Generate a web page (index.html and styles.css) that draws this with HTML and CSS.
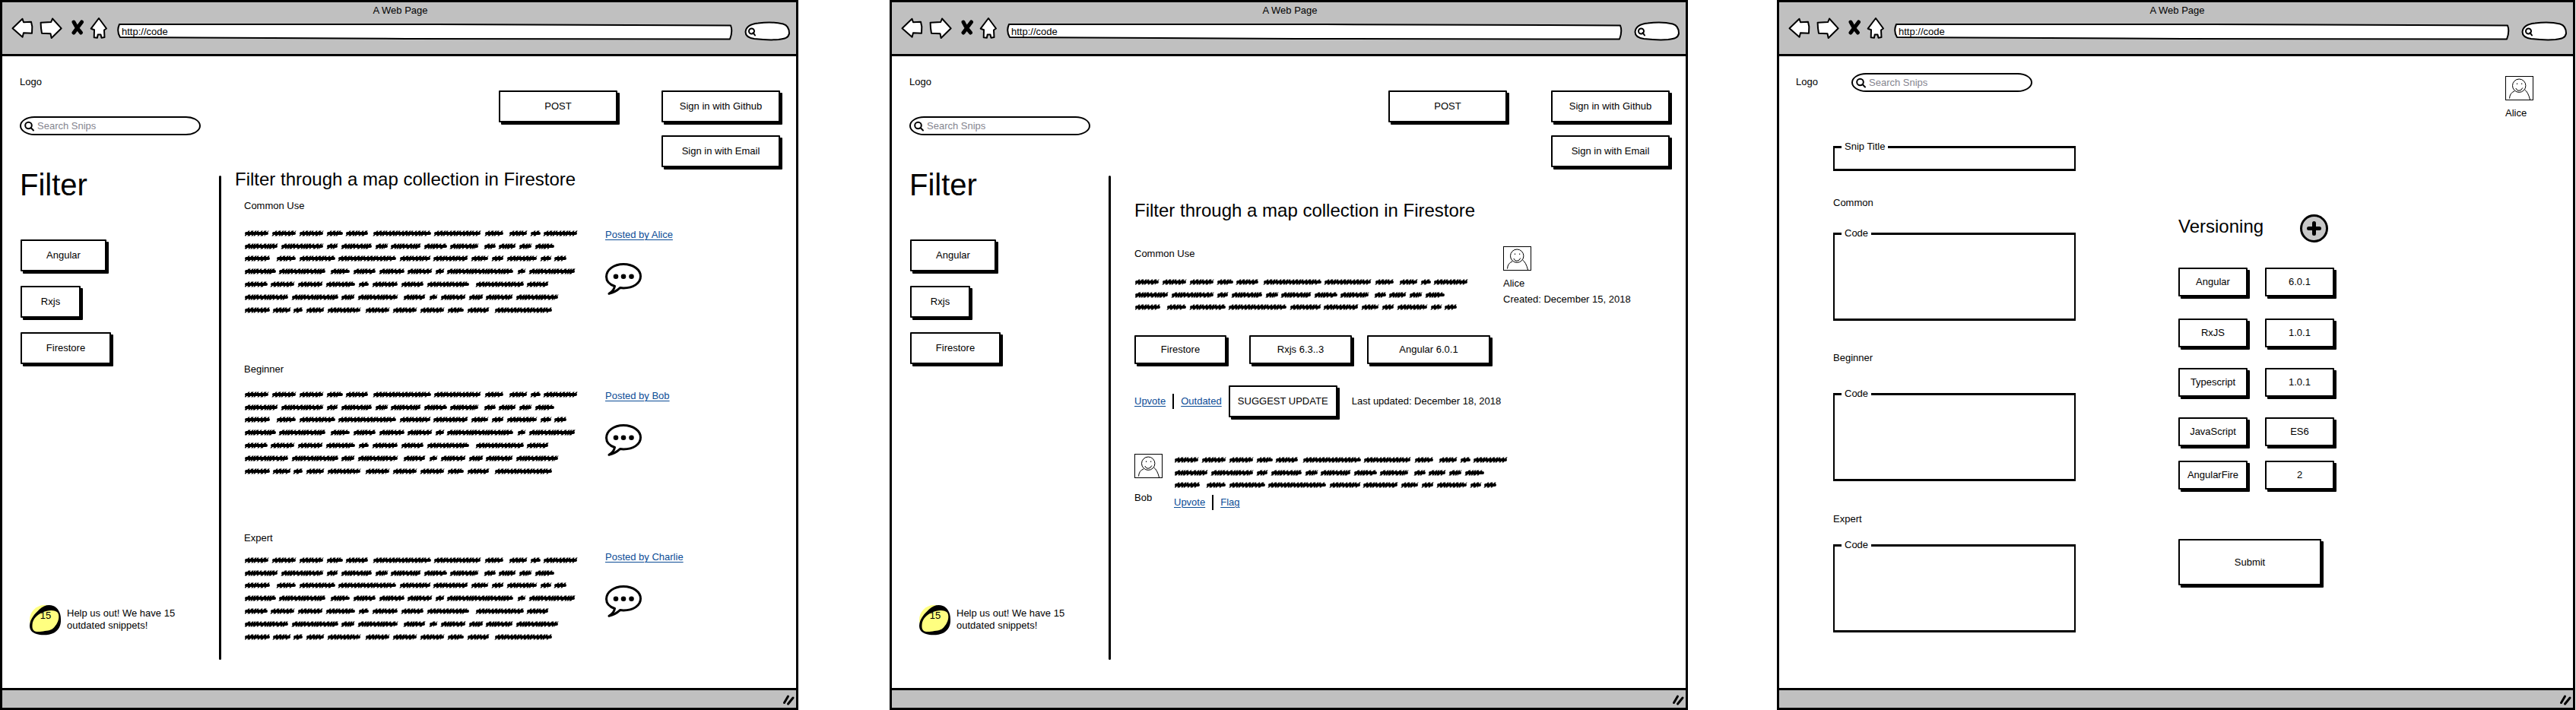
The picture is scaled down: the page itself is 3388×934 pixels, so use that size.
FILE: index.html
```html
<!DOCTYPE html>
<html lang="en">
<head>
<meta charset="utf-8">
<title>A Web Page</title>
<link rel="stylesheet" href="styles.css">
</head>
<body>

<svg class="sprite" aria-hidden="true">
  <defs>
    <symbol id="i-back" viewBox="14 22 34 32"><path class="ink fill-white" d="M16.500 37.300L29.500 24.700L31 29.300L41 28.700L42.300 35L42 43.700L31 43.300L29.600 48.700Z"/></symbol>
    <symbol id="i-forward" viewBox="48 22 40 32"><path class="ink fill-white" d="M53.600 29.700L67.200 29L69 24.500L80.700 37.300L67.700 50L66.500 44.300L55 43.800L54 37Z"/></symbol>
    <symbol id="i-stop" viewBox="88 22 26 32"><path class="ink-thick" d="M97 29Q100 36 106.500 43M107.500 29Q103 35 97 43"/></symbol>
    <symbol id="i-home" viewBox="114 22 32 32"><path class="ink fill-white" d="M130 24L140 37.500L137 39.500L137.500 49L133.500 49.700L132.500 45.500H128.700L128 49.700L123.700 49.300L124 39.300L119.700 37.700Z"/></symbol>
    <symbol id="i-pill" viewBox="979 22 60 32"><path class="ink fill-white" d="M980.500 42C981 35 988 31.500 997 30.500C1008 29 1022 29.500 1030 31.500C1037 33.500 1038 39 1038 44C1037 50 1032 51 1024 52C1012 53 1001 52 992 51C985 50 980.500 48 980.500 42Z"/><circle class="ink" cx="988.500" cy="41" r="3.500"/><path class="ink" d="M990.500 43L993 46.500"/></symbol>
    <symbol id="i-glass" viewBox="0 0 14 14"><circle class="ink" cx="5.500" cy="6" r="4.300"/><path class="ink" d="M8.500 9L12 12.500"/></symbol>
    <symbol id="i-grip" viewBox="0 0 18 16"><path class="ink-grip" d="M7.500 3L2.500 11.500M14 5L7.500 13"/></symbol>
    <symbol id="i-bubble" viewBox="0 0 48 42"><path class="ink-bold fill-white" d="M12.500 30.500C5 28 1.500 23.500 1.500 18C1.500 9 11 1.500 24 1.500S46.500 9 46.500 17.500C46.500 26.500 37 33 24 33Q22 33 19.500 32.600Q13 38.500 5 40.300Q11.500 36.500 12.500 30.500Z"/><circle cx="14" cy="17.700" r="3.300"/><circle cx="24" cy="17.700" r="3.300"/><circle cx="34.500" cy="17.700" r="3.300"/></symbol>
    <symbol id="i-avatar" viewBox="0 0 38 32"><rect x=".5" y=".5" width="36" height="31" class="hair fill-white"/><ellipse class="hair" cx="18.200" cy="12.700" rx="8.700" ry="8.700"/><path class="hair" d="M15.500 9.500V11M21.700 9.500V11M13.800 16Q15 19.300 18 19.300Q21.500 19 22.800 15.500M5.500 29.500Q6 22 12 20M25.500 18Q30 21 32.500 31"/></symbol>
    <symbol id="i-badge" viewBox="39 795 42 41"><circle cx="58.500" cy="815.500" r="19.500" class="yellow"/><path d="M39 823C39.500 814 46 807 52 801.500C57 796.500 64 794.500 70 797C76 799.500 80 806 80 814C80.500 822 78 828 71 832.500C64 836 54 836 48 834C42 832 39 829 39 823Z"/><path class="yellow" d="M42.500 822C43 814 49 808.500 56 805.500C63 802 73 802 76 806C79 811 76.500 819 72.500 823.500C70 828 65 829.500 59 830C54 831 47 832 44.500 829.500C42.500 827.500 42.300 825 42.500 822Z"/></symbol>

    <path id="w1" d="M2 0H29M38 0H65M74 0H101M110 0H127M135 0H160M171 0H243M251 0H308M318 0H338M350 0H369M378 0H387M395 0H435"/>
    <path id="w2" d="M2 0H41M50 0H101M110 0H120M129 0H165M174 0H186M194 0H229M238 0H264M272 0H305M317 0H328M336 0H354M363 0H375M384 0H405"/>
    <path id="w3" d="M2 0H31M44 0H65M74 0H117M125 0H197M206 0H242M250 0H291M300 0H318M327 0H338M347 0H382M391 0H401M409 0H421"/>
    <path id="w4" d="M2 0H39M47 0H104M115 0H136M145 0H170M179 0H208M216 0H244M253 0H260M268 0H351M361 0H367M376 0H432"/>
    <path id="w5" d="M2 0H28M36 0H63M72 0H100M109 0H143M152 0H161M170 0H199M208 0H233M242 0H293M306 0H365M373 0H397"/>
    <path id="w6" d="M2 0H55M64 0H121M129 0H142M151 0H199M211 0H235M245 0H251M260 0H288M297 0H311M319 0H350M359 0H410"/>
    <path id="w7" d="M2 0H31M39 0H58M66 0H74M83 0H102M111 0H150M161 0H188M197 0H224M233 0H260M269 0H286M295 0H319M331 0H402"/>
    <g id="text-3">
      <g transform="translate(0 7)"><use href="#w1" class="core"/><use href="#w1" class="ticks" transform="skewX(-38)"/></g>
      <g transform="translate(0 24)"><use href="#w2" class="core"/><use href="#w2" class="ticks ticks-b" transform="skewX(-38)"/></g>
      <g transform="translate(0 40)"><use href="#w3" class="core"/><use href="#w3" class="ticks" transform="skewX(-38)"/></g>
    </g>
    <g id="text-7">
      <use href="#text-3"/>
      <g transform="translate(0 57)"><use href="#w4" class="core"/><use href="#w4" class="ticks ticks-b" transform="skewX(-38)"/></g>
      <g transform="translate(0 74)"><use href="#w5" class="core"/><use href="#w5" class="ticks" transform="skewX(-38)"/></g>
      <g transform="translate(0 91)"><use href="#w6" class="core"/><use href="#w6" class="ticks ticks-b" transform="skewX(-38)"/></g>
      <g transform="translate(0 108)"><use href="#w7" class="core"/><use href="#w7" class="ticks" transform="skewX(-38)"/></g>
    </g>
  </defs>
</svg>

<div class="boards">

<!-- Snippet list -->
<section class="window">
  <header class="chrome">
    <div class="chrome-title">A Web Page</div>
    <div class="toolbar">
      <button class="tool" aria-label="Back"><svg width="34" height="32"><use href="#i-back"/></svg></button>
      <button class="tool" aria-label="Forward"><svg width="40" height="32"><use href="#i-forward"/></svg></button>
      <button class="tool" aria-label="Stop"><svg width="26" height="32"><use href="#i-stop"/></svg></button>
      <button class="tool" aria-label="Home"><svg width="32" height="32"><use href="#i-home"/></svg></button>
      <div class="address">
        <svg class="address-frame" viewBox="0 0 811 22" preserveAspectRatio="none"><path class="ink fill-white" d="M3 1H420L808 2.500Q811 10 807 20.500L380 20L4 18Q-1 10 3 1Z"/></svg>
        <input class="address-input" type="text" value="http://code" aria-label="Address">
      </div>
      <div class="quick"><svg width="60" height="32"><use href="#i-pill"/></svg><input class="quick-input" type="text" aria-label="Web search"></div>
    </div>
  </header>
  <div class="page">
    <div class="topbar">
      <div class="brand">
        <div class="logo">Logo</div>
        <label class="search"><svg width="14" height="14"><use href="#i-glass"/></svg><input type="search" placeholder="Search Snips" aria-label="Search Snips"></label>
      </div>
      <div class="actions">
        <button class="btn btn-wide">POST</button>
        <div class="signin">
          <button class="btn btn-wide">Sign in with Github</button>
          <button class="btn btn-wide">Sign in with Email</button>
        </div>
      </div>
    </div>
    <div class="columns">
      <aside class="sidebar">
        <h1 class="filter-title">Filter</h1>
        <div class="filters">
          <button class="btn w-angular">Angular</button>
          <button class="btn w-rxjs">Rxjs</button>
          <button class="btn w-firestore">Firestore</button>
        </div>
        <div class="help">
          <div class="badge"><svg width="42" height="41"><use href="#i-badge"/></svg><span class="badge-count">15</span></div>
          <p class="help-text">Help us out! We have 15<br>outdated snippets!</p>
        </div>
      </aside>
      <div class="divider"></div>
      <main class="feed">
        <h2 class="title">Filter through a map collection in Firestore</h2>
        <section class="snippet snippet-common">
          <h3 class="label">Common Use</h3>
          <div class="snippet-row">
            <svg class="scribble" width="440" height="114" role="img" aria-label="Snippet text"><use href="#text-7"/></svg>
            <div class="meta"><a class="link" href="#alice">Posted by Alice</a><svg class="bubble" width="48" height="42"><use href="#i-bubble"/></svg></div>
          </div>
        </section>
        <section class="snippet snippet-beginner">
          <h3 class="label">Beginner</h3>
          <div class="snippet-row">
            <svg class="scribble" width="440" height="114" role="img" aria-label="Snippet text"><use href="#text-7"/></svg>
            <div class="meta"><a class="link" href="#bob">Posted by Bob</a><svg class="bubble" width="48" height="42"><use href="#i-bubble"/></svg></div>
          </div>
        </section>
        <section class="snippet snippet-expert">
          <h3 class="label">Expert</h3>
          <div class="snippet-row">
            <svg class="scribble" width="440" height="114" role="img" aria-label="Snippet text"><use href="#text-7"/></svg>
            <div class="meta"><a class="link" href="#charlie">Posted by Charlie</a><svg class="bubble" width="48" height="42"><use href="#i-bubble"/></svg></div>
          </div>
        </section>
      </main>
    </div>
  </div>
  <footer class="status"><svg width="18" height="16"><use href="#i-grip"/></svg></footer>
</section>

<!-- Snippet detail -->
<section class="window window-detail">
  <header class="chrome">
    <div class="chrome-title">A Web Page</div>
    <div class="toolbar">
      <button class="tool" aria-label="Back"><svg width="34" height="32"><use href="#i-back"/></svg></button>
      <button class="tool" aria-label="Forward"><svg width="40" height="32"><use href="#i-forward"/></svg></button>
      <button class="tool" aria-label="Stop"><svg width="26" height="32"><use href="#i-stop"/></svg></button>
      <button class="tool" aria-label="Home"><svg width="32" height="32"><use href="#i-home"/></svg></button>
      <div class="address">
        <svg class="address-frame" viewBox="0 0 811 22" preserveAspectRatio="none"><path class="ink fill-white" d="M3 1H420L808 2.500Q811 10 807 20.500L380 20L4 18Q-1 10 3 1Z"/></svg>
        <input class="address-input" type="text" value="http://code" aria-label="Address">
      </div>
      <div class="quick"><svg width="60" height="32"><use href="#i-pill"/></svg><input class="quick-input" type="text" aria-label="Web search"></div>
    </div>
  </header>
  <div class="page">
    <div class="topbar">
      <div class="brand">
        <div class="logo">Logo</div>
        <label class="search"><svg width="14" height="14"><use href="#i-glass"/></svg><input type="search" placeholder="Search Snips" aria-label="Search Snips"></label>
      </div>
      <div class="actions">
        <button class="btn btn-wide">POST</button>
        <div class="signin">
          <button class="btn btn-wide">Sign in with Github</button>
          <button class="btn btn-wide">Sign in with Email</button>
        </div>
      </div>
    </div>
    <div class="columns">
      <aside class="sidebar">
        <h1 class="filter-title">Filter</h1>
        <div class="filters">
          <button class="btn w-angular">Angular</button>
          <button class="btn w-rxjs">Rxjs</button>
          <button class="btn w-firestore">Firestore</button>
        </div>
        <div class="help">
          <div class="badge"><svg width="42" height="41"><use href="#i-badge"/></svg><span class="badge-count">15</span></div>
          <p class="help-text">Help us out! We have 15<br>outdated snippets!</p>
        </div>
      </aside>
      <div class="divider"></div>
      <main class="detail">
        <h2 class="title">Filter through a map collection in Firestore</h2>
        <div class="detail-grid">
          <div class="detail-text">
            <h3 class="label">Common Use</h3>
            <svg class="scribble" width="440" height="47" role="img" aria-label="Snippet text"><use href="#text-3"/></svg>
          </div>
          <div class="author">
            <svg width="38" height="32"><use href="#i-avatar"/></svg>
            <div class="author-name">Alice</div>
            <div class="author-date">Created: December 15, 2018</div>
          </div>
        </div>
        <div class="tags">
          <button class="btn btn-short w-tag-firestore">Firestore</button>
          <button class="btn btn-short w-tag-rxjs">Rxjs 6.3..3</button>
          <button class="btn btn-short w-tag-angular">Angular 6.0.1</button>
        </div>
        <div class="votes">
          <a class="link" href="#upvote">Upvote</a><span class="bar"></span><a class="link" href="#outdated">Outdated</a>
          <button class="btn w-suggest">SUGGEST UPDATE</button>
          <span class="updated">Last updated: December 18, 2018</span>
        </div>
        <article class="comment">
          <div class="commenter"><svg width="38" height="32"><use href="#i-avatar"/></svg><div>Bob</div></div>
          <div class="comment-body">
            <svg class="scribble" width="440" height="47" role="img" aria-label="Comment text"><use href="#text-3"/></svg>
            <div class="comment-links"><a class="link" href="#upvote-comment">Upvote</a><span class="bar"></span><a class="link" href="#flag">Flag</a></div>
          </div>
        </article>
      </main>
    </div>
  </div>
  <footer class="status"><svg width="18" height="16"><use href="#i-grip"/></svg></footer>
</section>

<!-- New snippet form -->
<section class="window window-form">
  <header class="chrome">
    <div class="chrome-title">A Web Page</div>
    <div class="toolbar">
      <button class="tool" aria-label="Back"><svg width="34" height="32"><use href="#i-back"/></svg></button>
      <button class="tool" aria-label="Forward"><svg width="40" height="32"><use href="#i-forward"/></svg></button>
      <button class="tool" aria-label="Stop"><svg width="26" height="32"><use href="#i-stop"/></svg></button>
      <button class="tool" aria-label="Home"><svg width="32" height="32"><use href="#i-home"/></svg></button>
      <div class="address">
        <svg class="address-frame" viewBox="0 0 811 22" preserveAspectRatio="none"><path class="ink fill-white" d="M3 1H420L808 2.500Q811 10 807 20.500L380 20L4 18Q-1 10 3 1Z"/></svg>
        <input class="address-input" type="text" value="http://code" aria-label="Address">
      </div>
      <div class="quick"><svg width="60" height="32"><use href="#i-pill"/></svg><input class="quick-input" type="text" aria-label="Web search"></div>
    </div>
  </header>
  <div class="page">
    <div class="formbar">
      <div class="logo">Logo</div>
      <label class="search"><svg width="14" height="14"><use href="#i-glass"/></svg><input type="search" placeholder="Search Snips" aria-label="Search Snips"></label>
      <div class="account"><svg width="38" height="32"><use href="#i-avatar"/></svg><div>Alice</div></div>
    </div>
    <form class="editor">
      <div class="fields">
        <fieldset class="box box-title"><legend><label for="snip-title">Snip Title</label></legend><input id="snip-title" type="text"></fieldset>
        <h3 class="label label-common">Common</h3>
        <fieldset class="box"><legend><label for="code-common">Code</label></legend><textarea id="code-common"></textarea></fieldset>
        <h3 class="label label-beginner">Beginner</h3>
        <fieldset class="box"><legend><label for="code-beginner">Code</label></legend><textarea id="code-beginner"></textarea></fieldset>
        <h3 class="label label-expert">Expert</h3>
        <fieldset class="box"><legend><label for="code-expert">Code</label></legend><textarea id="code-expert"></textarea></fieldset>
      </div>
      <div class="versioning">
        <div class="versioning-head">
          <h2 class="title">Versioning</h2>
          <button type="button" class="add" aria-label="Add version"><svg width="37" height="37" viewBox="0 0 37 37"><circle cx="18.500" cy="18.500" r="17" class="add-disc"/><path class="add-plus" d="M18.500 11.500V25.500M11.500 18.500H25.500"/></svg></button>
        </div>
        <div class="versions">
          <button type="button" class="btn btn-short">Angular</button><button type="button" class="btn btn-short">6.0.1</button>
          <button type="button" class="btn btn-short">RxJS</button><button type="button" class="btn btn-short">1.0.1</button>
          <button type="button" class="btn btn-short">Typescript</button><button type="button" class="btn btn-short">1.0.1</button>
          <button type="button" class="btn btn-short">JavaScript</button><button type="button" class="btn btn-short">ES6</button>
          <button type="button" class="btn btn-short">AngularFire</button><button type="button" class="btn btn-short">2</button>
        </div>
        <button type="submit" class="btn btn-submit">Submit</button>
      </div>
    </form>
  </div>
  <footer class="status"><svg width="18" height="16"><use href="#i-grip"/></svg></footer>
</section>

</div>
</body>
</html>
```

FILE: styles.css
```css
* { box-sizing: border-box; }

body {
  margin: 0;
  background: #fff;
  color: #000;
  font: 13px/16px "Liberation Sans", Arial, sans-serif;
}

h1, h2, h3, p { margin: 0; font-weight: normal; }

button, input, textarea {
  margin: 0;
  padding: 0;
  border: 0;
  background: none;
  color: inherit;
  font: inherit;
}

input, textarea { outline: 0; min-width: 0; }

svg { display: block; flex: none; }

.sprite { position: absolute; width: 0; height: 0; }

/* Ink strokes */
.ink { fill: none; stroke: #000; stroke-width: 2; stroke-linejoin: round; stroke-linecap: round; vector-effect: non-scaling-stroke; }
.ink-thick { fill: none; stroke: #000; stroke-width: 5; stroke-linecap: round; }
.ink-bold { stroke: #000; stroke-width: 3; stroke-linejoin: round; }
.ink-grip { fill: none; stroke: #000; stroke-width: 3; stroke-linecap: round; }
.hair { fill: none; stroke: #000; stroke-width: 1; }
.fill-white { fill: #fff; }
.yellow { fill: #ffff80; }
.core { fill: none; stroke: #000; stroke-width: 4; stroke-linecap: round; }
.ticks { fill: none; stroke: #000; stroke-width: 7; stroke-dasharray: 2 2 3 2 2 1 2 3; }
.ticks-b { stroke-dasharray: 3 2 2 1 2 1 3 2 2 3; }

/* Windows */
.boards { display: flex; padding-right: 1px; min-height: 100vh; }

.window {
  flex: 1 1 0;
  min-width: 0;
  display: flex;
  flex-direction: column;
  border: 3px solid #000;
}
.window-detail { margin-left: 120px; }
.window-form { margin-left: 117px; }

.chrome {
  padding: 3px 8px 17px 11px;
  background: #c0c0c0;
  border-bottom: 3px solid #000;
}
.chrome-title { text-align: center; }

.toolbar { display: flex; }
.tool { flex: none; }

.address {
  flex: 1;
  display: grid;
  height: 22px;
  margin: 9px 15px 0 8px;
}
.address-frame { grid-area: 1 / 1; width: 100%; height: 22px; overflow: visible; }
.address-input { grid-area: 1 / 1; height: 20px; padding: 0 6px; }

.quick { display: grid; flex: none; grid-template-columns: 60px; }
.quick > svg { grid-area: 1 / 1; }
.quick-input { grid-area: 1 / 1; margin: 10px 4px 4px 18px; }

.page { flex: 1; display: flex; flex-direction: column; }

.status {
  display: flex;
  justify-content: flex-end;
  height: 26px;
  padding: 5px 0 0;
  background: #c0c0c0;
  border-top: 3px solid #000;
}

/* Shared controls */
.btn {
  flex: none;
  height: 42px;
  background: #fff;
  border: 2px solid #000;
  border-radius: 1px;
  box-shadow: 3px 3px 0 #000;
  text-align: center;
}
.btn-short { height: 38px; }
.btn-wide { width: 156px; }
.btn-submit { width: 188px; height: 61px; margin-top: 65px; }
.w-angular { width: 113px; }
.w-rxjs { width: 79px; }
.w-firestore { width: 119px; }
.w-tag-firestore { width: 121px; }
.w-tag-rxjs { width: 135px; }
.w-tag-angular { width: 162px; }
.w-suggest { width: 143px; }

.link {
  color: #0b4c96;
  text-decoration: underline;
  text-decoration-thickness: 1px;
  text-underline-offset: 2px;
}

.search {
  display: flex;
  align-items: center;
  gap: 3px;
  width: 238px;
  height: 25px;
  padding: 0 12px 0 4px;
  border: 2px solid #000;
  border-radius: 20px / 13px;
}
.search input { flex: 1; appearance: none; }
.search input::placeholder { color: #85858f; opacity: 1; }

.title { font-size: 24px; line-height: 28px; }
.label { font-size: 13px; line-height: 16px; }

/* Top area */
.topbar {
  display: flex;
  justify-content: space-between;
  padding: 26px 21px 0 23px;
}
.brand { display: flex; flex-direction: column; gap: 37px; }
.actions { display: flex; gap: 58px; padding-top: 19px; }
.signin { display: flex; flex-direction: column; gap: 17px; }

/* Sidebar */
.columns { flex: 1; display: flex; margin-top: 2px; }

.sidebar {
  flex: none;
  display: flex;
  flex-direction: column;
  width: 286px;
  padding: 0 0 69px 23px;
}
.filter-title { font-size: 40px; line-height: 42px; }
.filters {
  display: flex;
  flex-direction: column;
  align-items: flex-start;
  gap: 19px;
  margin: 51px 0 0 1px;
}
.help { display: flex; gap: 7px; margin: auto 0 0 13px; }
.badge { display: grid; }
.badge svg { grid-area: 1 / 1; }
.badge-count { grid-area: 1 / 1; padding-top: 7px; text-align: center; }
.help-text { padding-top: 4px; }

.divider { flex: none; width: 3px; margin: 9px 0 37px -1px; background: #000; border-radius: 2px; }

/* Feed */
.feed { flex: 1; min-width: 0; padding-left: 18px; }
.snippet { padding-left: 12px; }
.snippet-common { margin-top: 13px; }
.snippet-beginner { margin-top: 64px; }
.snippet-expert { margin-top: 74px; }
.snippet-row { display: flex; gap: 34px; margin-top: 21px; }
.snippet-beginner .snippet-row { margin-top: 18px; }
.snippet-expert .snippet-row { margin-top: 8px; }
.snippet-expert .scribble { margin-top: 6px; }
.scribble { margin-left: 1px; }
.meta { padding-top: 1px; }
.bubble { margin-top: 29px; }

/* Detail */
.detail { flex: 1; min-width: 0; padding: 41px 0 0 31px; }
.detail-grid { display: flex; gap: 44px; margin-top: 33px; }
.detail-text { padding-top: 2px; }
.detail-text .scribble { margin-top: 22px; }
.author-name { margin-top: 9px; }
.author-date { margin-top: 5px; }
.tags { display: flex; margin-top: 30px; }
.w-tag-rxjs { margin-left: 30px; }
.w-tag-angular { margin-left: 20px; }
.votes { display: flex; align-items: center; gap: 9px; margin-top: 28px; }
.updated { margin-left: 10px; }
.bar { width: 2px; height: 20px; background: #000; }
.comment { display: flex; gap: 14px; margin-top: 48px; }
.commenter { display: flex; flex-direction: column; gap: 18px; }
.comment-body { padding-top: 1px; }
.comment-links { display: flex; align-items: center; gap: 9px; margin-top: 6px; }

/* Form */
.formbar { display: flex; padding: 22px 51px 0 22px; }
.formbar .logo { width: 73px; padding-top: 4px; }
.account { display: flex; flex-direction: column; gap: 9px; margin-left: auto; padding-top: 4px; }
.editor { display: flex; margin: 28px 0 0 71px; }
.fields { width: 319px; }
.box {
  height: 123px;
  min-width: 0;
  margin: 0;
  padding: 0 8px 4px 9px;
  border: 2px solid #000;
  border-top-width: 3px;
  border-bottom-width: 3px;
}
.box-title { height: 40px; }
.box legend { padding: 0 4px; }
.box input, .box textarea { display: block; width: 100%; height: 100%; resize: none; }
.label-common { margin: 34px 0 24px; }
.label-beginner { margin: 41px 0 31px; }
.label-expert { margin: 42px 0 18px; }

.versioning { margin-left: 135px; padding-top: 97px; }
.versioning-head { display: flex; justify-content: space-between; width: 197px; }
.versioning-head .title { line-height: 32px; }
.add-disc { fill: #c8c8c8; stroke: #000; stroke-width: 3; }
.add-plus { stroke: #000; stroke-width: 5; stroke-linecap: round; }
.versions {
  display: grid;
  grid-template-columns: 91px 91px;
  grid-template-rows: 67px 65px 65px 57px 38px;
  align-items: start;
  column-gap: 23px;
  margin-top: 33px;
}
```
